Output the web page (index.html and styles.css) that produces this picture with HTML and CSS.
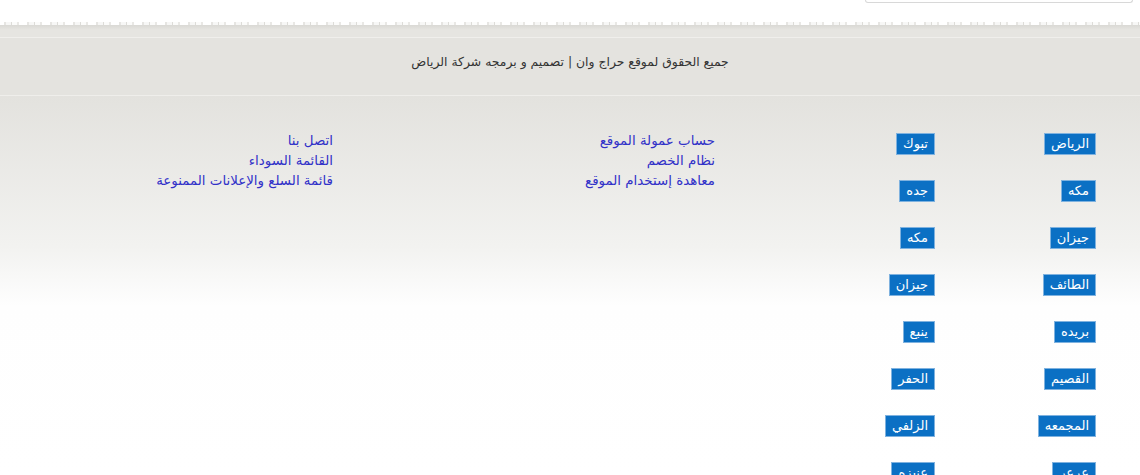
FILE: index.html
```html
<!DOCTYPE html>
<html lang="ar" dir="rtl">
<head>
<meta charset="utf-8">
<link rel="stylesheet" href="styles.css">
</head>
<body>
<div class="top">
  <div class="searchbox"></div>
</div>
<div class="torn"></div>
<div class="band"></div>
<div class="copyright">جميع الحقوق لموقع حراج وان | تصميم و برمجه شركة الرياض</div>
<div class="footer">
  <div class="col cities">
    <a class="city">الرياض</a>
    <a class="city">مكه</a>
    <a class="city">جيزان</a>
    <a class="city">الطائف</a>
    <a class="city">بريده</a>
    <a class="city">القصيم</a>
    <a class="city">المجمعه</a>
    <a class="city">عرعر</a>
  </div>
  <div class="col cities2">
    <a class="city">تبوك</a>
    <a class="city">جده</a>
    <a class="city">مكه</a>
    <a class="city">جيزان</a>
    <a class="city">ينبع</a>
    <a class="city">الحفر</a>
    <a class="city">الزلفي</a>
    <a class="city">عنيزه</a>
  </div>
  <div class="col links1">
    <a class="link">حساب عمولة الموقع</a>
    <a class="link">نظام الخصم</a>
    <a class="link">معاهدة إستخدام الموقع</a>
  </div>
  <div class="col links2">
    <a class="link">اتصل بنا</a>
    <a class="link">القائمة السوداء</a>
    <a class="link">قائمة السلع والإعلانات الممنوعة</a>
  </div>
</div>
</body>
</html>
```

FILE: styles.css
```css
html, body {
  margin: 0;
  padding: 0;
  height: 475px;
  overflow: hidden;
  font-family: "DejaVu Sans", sans-serif;
  background: #fff;
}
.top {
  height: 22px;
  background: #fff;
  display: flex;
  justify-content: flex-start;
  padding-right: 7px;
}
.searchbox {
  width: 266px;
  height: 2px;
  border: 1px solid #d8d8d8;
  border-top: none;
  border-radius: 0 0 4px 4px;
  background: #fff;
}
.torn {
  height: 3px;
  background:
    repeating-linear-gradient(90deg, #fff 0 4px, #e6e5e2 4px 6px, #f7f7f6 6px 11px, #dddcd8 11px 12px, #fbfbfa 12px 17px, #e9e8e5 17px 19px, #fff 19px 23px);
}
.band {
  height: 12px;
  background: linear-gradient(#dad9d5, #e6e5e1 5px);
  border-bottom: 1px solid #f0efec;
}
.copyright {
  height: 58px;
  background: #e4e3df;
  border-bottom: 1px solid #efeeeb;
  display: flex;
  align-items: center;
  justify-content: center;
  font-size: 12.4px;
  color: #333;
  padding-bottom: 10px;
  box-sizing: border-box;
}
.footer {
  display: flex;
  padding: 35px 44px 0 0;
  height: 378px;
  box-sizing: border-box;
  background: linear-gradient(#e3e2de, #f2f2f0 150px, #fefefe 210px, #fff);
}
.col {
  display: flex;
  flex-direction: column;
  align-items: flex-start;
}
.cities { width: 161px; }
.cities2 { width: 220px; }
.links1 { width: 382px; }
.cities, .cities2 {
  padding-top: 2px;
  gap: 25px;
}
.city {
  display: block;
  height: 20px;
  line-height: 20px;
  padding: 0 6px;
  background: #0b70c4;
  border: 1px solid #7fb2df;
  color: #fff;
  font-size: 13px;
}
.link {
  display: block;
  line-height: 20px;
  font-size: 13.4px;
  color: #3131c8;
}
```
